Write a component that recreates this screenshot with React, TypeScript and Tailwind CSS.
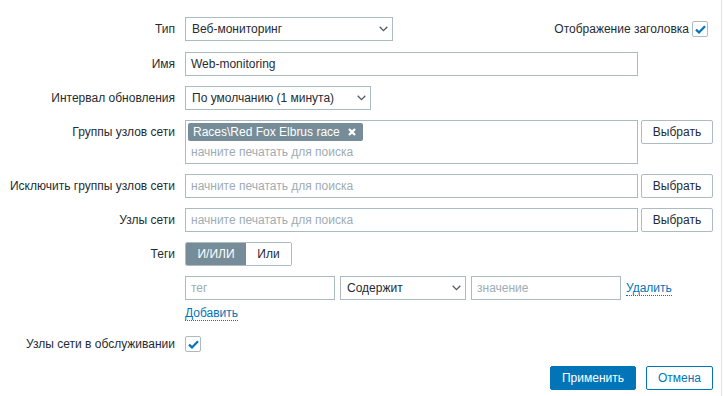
import React from 'react';

const font = { fontFamily: '"Liberation Sans", Arial, sans-serif' };

const Chevron: React.FC = () => (
  <svg width="9" height="6" viewBox="0 0 9 6" className="shrink-0">
    <path d="M0.7 0.8 L4.5 4.6 L8.3 0.8" fill="none" stroke="#4f5b61" strokeWidth="1.3" />
  </svg>
);

const Check: React.FC = () => (
  <div className="w-[16px] h-[16px] border border-[#acbbc2] rounded-[2px] bg-white flex items-center justify-center">
    <svg width="11" height="9" viewBox="0 0 11 9">
      <path d="M1 4.6 L4 7.4 L10 1.2" fill="none" stroke="#0275b8" strokeWidth="2.2" />
    </svg>
  </div>
);

const Select: React.FC<{ value: string; w: string }> = ({ value, w }) => (
  <div className={`${w} h-[24px] border border-[#acbbc2] bg-white flex items-center justify-between pl-[6px] pr-[4px] text-[#1f2c33]`}>
    <span>{value}</span>
    <Chevron />
  </div>
);

const Input: React.FC<{ w: string; value?: string; placeholder?: string }> = ({ w, value, placeholder }) => (
  <div className={`${w} h-[24px] border border-[#acbbc2] bg-white flex items-center px-[5px]`}>
    {value ? <span className="text-[#1f2c33]">{value}</span> : <span className="text-[#9eacb3]">{placeholder}</span>}
  </div>
);

const Btn: React.FC<{ children: React.ReactNode }> = ({ children }) => (
  <div className="w-[72px] h-[24px] border border-[#acbbc2] rounded-[2px] bg-white flex items-center justify-center text-[#1f2c33]">
    {children}
  </div>
);

const Row: React.FC<{ label: string; children: React.ReactNode; className?: string }> = ({ label, children, className }) => (
  <div className={`flex items-start ${className ?? ''}`}>
    <div className="w-[185px] pr-[10px] text-right leading-[24px] shrink-0">{label}</div>
    <div className="w-[528px]">{children}</div>
  </div>
);

export default function App() {
  return (
    <div className="w-[724px] h-[396px] bg-white text-[12px] text-[#1f2c33]" style={font}>
      <div className="w-[722px] h-full border-r border-[#dde3e6] pt-[17px] flex flex-col">
        <Row label="Тип" className="mb-[11px]">
          <div className="flex items-center justify-between">
            <Select value="Веб-мониторинг" w="w-[208px]" />
            <div className="flex items-center gap-[3px] pr-[5px]">
              <span>Отображение заголовка</span>
              <Check />
            </div>
          </div>
        </Row>

        <Row label="Имя" className="mb-[10px]">
          <Input w="w-[453px]" value="Web-monitoring" />
        </Row>

        <Row label="Интервал обновления" className="mb-[10px]">
          <Select value="По умолчанию (1 минута)" w="w-[186px]" />
        </Row>

        <Row label="Группы узлов сети" className="mb-[10px]">
          <div className="flex items-start gap-[3px]">
            <div className="w-[453px] h-[44px] border border-[#acbbc2] bg-white pl-[2px] pt-[2px]">
              <div className="inline-flex items-center h-[18px] bg-[#768d99] text-white rounded-[2px] pl-[5px] pr-[7px] gap-[8px]">
                <span>Races\Red Fox Elbrus race</span>
                <svg width="8" height="8" viewBox="0 0 8 8">
                  <path d="M1 1 L7 7 M7 1 L1 7" stroke="white" strokeWidth="2.2" />
                </svg>
              </div>
              <div className="pl-[3px] pt-[1px] leading-[20px] text-[#9eacb3]">начните печатать для поиска</div>
            </div>
            <Btn>Выбрать</Btn>
          </div>
        </Row>

        <Row label="Исключить группы узлов сети" className="mb-[10px]">
          <div className="flex items-start gap-[3px]">
            <Input w="w-[453px]" placeholder="начните печатать для поиска" />
            <Btn>Выбрать</Btn>
          </div>
        </Row>

        <Row label="Узлы сети" className="mb-[10px]">
          <div className="flex items-start gap-[3px]">
            <Input w="w-[453px]" placeholder="начните печатать для поиска" />
            <Btn>Выбрать</Btn>
          </div>
        </Row>

        <Row label="Теги" className="mb-[10px]">
          <div className="inline-flex h-[24px] border border-[#acbbc2] rounded-[2px] overflow-hidden">
            <div className="w-[60px] bg-[#768d99] text-white flex items-center justify-center">И/ИЛИ</div>
            <div className="w-[45px] bg-white flex items-center justify-center">Или</div>
          </div>
        </Row>

        <div className="flex pl-[185px]">
          <div className="flex items-center gap-[5px]">
            <Input w="w-[150px]" placeholder="тег" />
            <Select value="Содержит" w="w-[126px]" />
            <Input w="w-[150px]" placeholder="значение" />
            <span className="text-[#0275b8] border-b border-dotted border-[#0275b8] leading-[14px]">Удалить</span>
          </div>
        </div>

        <div className="pl-[185px] mt-[5px] mb-[10px] h-[17px] flex items-center">
          <span className="text-[#0275b8] border-b border-dotted border-[#0275b8] leading-[14px]">Добавить</span>
        </div>

        <Row label="Узлы сети в обслуживании" className="mb-[10px]">
          <div className="h-[24px] flex items-center">
            <Check />
          </div>
        </Row>

        <div className="flex justify-end gap-[10px] pr-[8px]">
          <div className="w-[86px] h-[24px] bg-[#0275b8] border border-[#0275b8] rounded-[2px] text-white flex items-center justify-center">Применить</div>
          <div className="w-[67px] h-[24px] bg-white border border-[#0275b8] rounded-[2px] text-[#0275b8] flex items-center justify-center">Отмена</div>
        </div>
      </div>
    </div>
  );
}
